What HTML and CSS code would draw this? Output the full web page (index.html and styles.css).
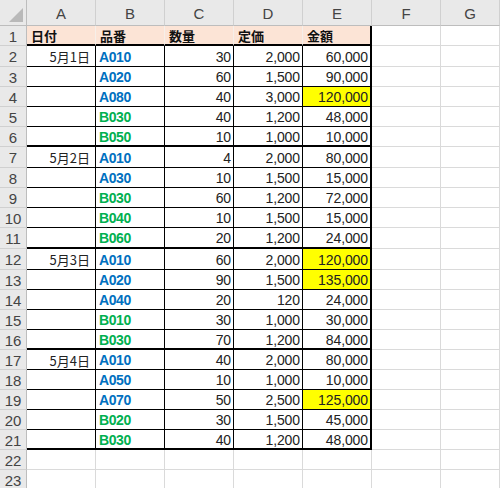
FILE: index.html
```html
<!DOCTYPE html>
<html lang="ja">
<head>
<meta charset="utf-8">
<link rel="stylesheet" href="styles.css">
</head>
<body>
<div class="sheet">
  <div class="cell corner"><svg class="tri" width="14" height="14" viewBox="0 0 14 14"><polygon points="14,0 14,14 0,14" fill="#b9b9b9"/></svg></div>
  <div class="cell ch">A</div><div class="cell ch">B</div><div class="cell ch">C</div><div class="cell ch">D</div><div class="cell ch">E</div><div class="cell ch">F</div><div class="cell ch">G</div>

  <div class="cell rh">1</div>
  <div class="cell t">日付</div><div class="cell t">品番</div><div class="cell t">数量</div><div class="cell t">定価</div><div class="cell t e">金額</div><div class="cell"></div><div class="cell"></div>

  <div class="cell rh">2</div>
  <div class="cell d n dt">5月1日</div><div class="cell d ca">A010</div><div class="cell d n">30</div><div class="cell d n">2,000</div><div class="cell d n e">60,000</div><div class="cell"></div><div class="cell"></div>

  <div class="cell rh">3</div>
  <div class="cell d"></div><div class="cell d ca">A020</div><div class="cell d n">60</div><div class="cell d n">1,500</div><div class="cell d n e">90,000</div><div class="cell"></div><div class="cell"></div>

  <div class="cell rh">4</div>
  <div class="cell d"></div><div class="cell d ca">A080</div><div class="cell d n">40</div><div class="cell d n">3,000</div><div class="cell d n e hl">120,000</div><div class="cell"></div><div class="cell"></div>

  <div class="cell rh">5</div>
  <div class="cell d"></div><div class="cell d cb">B030</div><div class="cell d n">40</div><div class="cell d n">1,200</div><div class="cell d n e">48,000</div><div class="cell"></div><div class="cell"></div>

  <div class="cell rh">6</div>
  <div class="cell d end"></div><div class="cell d cb end">B050</div><div class="cell d n end">10</div><div class="cell d n end">1,000</div><div class="cell d n e end">10,000</div><div class="cell"></div><div class="cell"></div>

  <div class="cell rh">7</div>
  <div class="cell d n dt">5月2日</div><div class="cell d ca">A010</div><div class="cell d n">4</div><div class="cell d n">2,000</div><div class="cell d n e">80,000</div><div class="cell"></div><div class="cell"></div>

  <div class="cell rh">8</div>
  <div class="cell d"></div><div class="cell d ca">A030</div><div class="cell d n">10</div><div class="cell d n">1,500</div><div class="cell d n e">15,000</div><div class="cell"></div><div class="cell"></div>

  <div class="cell rh">9</div>
  <div class="cell d"></div><div class="cell d cb">B030</div><div class="cell d n">60</div><div class="cell d n">1,200</div><div class="cell d n e">72,000</div><div class="cell"></div><div class="cell"></div>

  <div class="cell rh">10</div>
  <div class="cell d"></div><div class="cell d cb">B040</div><div class="cell d n">10</div><div class="cell d n">1,500</div><div class="cell d n e">15,000</div><div class="cell"></div><div class="cell"></div>

  <div class="cell rh">11</div>
  <div class="cell d end"></div><div class="cell d cb end">B060</div><div class="cell d n end">20</div><div class="cell d n end">1,200</div><div class="cell d n e end">24,000</div><div class="cell"></div><div class="cell"></div>

  <div class="cell rh">12</div>
  <div class="cell d n dt">5月3日</div><div class="cell d ca">A010</div><div class="cell d n">60</div><div class="cell d n">2,000</div><div class="cell d n e hl">120,000</div><div class="cell"></div><div class="cell"></div>

  <div class="cell rh">13</div>
  <div class="cell d"></div><div class="cell d ca">A020</div><div class="cell d n">90</div><div class="cell d n">1,500</div><div class="cell d n e hl">135,000</div><div class="cell"></div><div class="cell"></div>

  <div class="cell rh">14</div>
  <div class="cell d"></div><div class="cell d ca">A040</div><div class="cell d n">20</div><div class="cell d n">120</div><div class="cell d n e">24,000</div><div class="cell"></div><div class="cell"></div>

  <div class="cell rh">15</div>
  <div class="cell d"></div><div class="cell d cb">B010</div><div class="cell d n">30</div><div class="cell d n">1,000</div><div class="cell d n e">30,000</div><div class="cell"></div><div class="cell"></div>

  <div class="cell rh">16</div>
  <div class="cell d end"></div><div class="cell d cb end">B030</div><div class="cell d n end">70</div><div class="cell d n end">1,200</div><div class="cell d n e end">84,000</div><div class="cell"></div><div class="cell"></div>

  <div class="cell rh">17</div>
  <div class="cell d n dt">5月4日</div><div class="cell d ca">A010</div><div class="cell d n">40</div><div class="cell d n">2,000</div><div class="cell d n e">80,000</div><div class="cell"></div><div class="cell"></div>

  <div class="cell rh">18</div>
  <div class="cell d"></div><div class="cell d ca">A050</div><div class="cell d n">10</div><div class="cell d n">1,000</div><div class="cell d n e">10,000</div><div class="cell"></div><div class="cell"></div>

  <div class="cell rh">19</div>
  <div class="cell d"></div><div class="cell d ca">A070</div><div class="cell d n">50</div><div class="cell d n">2,500</div><div class="cell d n e hl">125,000</div><div class="cell"></div><div class="cell"></div>

  <div class="cell rh">20</div>
  <div class="cell d"></div><div class="cell d cb">B020</div><div class="cell d n">30</div><div class="cell d n">1,500</div><div class="cell d n e">45,000</div><div class="cell"></div><div class="cell"></div>

  <div class="cell rh">21</div>
  <div class="cell d end"></div><div class="cell d cb end">B030</div><div class="cell d n end">40</div><div class="cell d n end">1,200</div><div class="cell d n e end">48,000</div><div class="cell"></div><div class="cell"></div>

  <div class="cell rh">22</div>
  <div class="cell"></div><div class="cell"></div><div class="cell"></div><div class="cell"></div><div class="cell"></div><div class="cell"></div><div class="cell"></div>

  <div class="cell rh">23</div>
  <div class="cell"></div><div class="cell"></div><div class="cell"></div><div class="cell"></div><div class="cell"></div><div class="cell"></div><div class="cell"></div>
</div>
</body>
</html>
```

FILE: styles.css
```css
html, body {
  margin: 0;
  padding: 0;
  background: #ffffff;
}

.sheet {
  display: grid;
  width: 500px;
  grid-template-columns: 27px repeat(6, 69px) 1fr;
  grid-template-rows: 26px 20px 21px 20px 20px 20px 20px 21px 20px 20px 20px 21px 21px repeat(11, 20px);
  font-family: "Liberation Sans", "Noto Sans CJK JP", sans-serif;
  font-size: 14px;
  color: #222222;
}

.cell {
  box-sizing: border-box;
  display: flex;
  align-items: center;
  padding: 1px 3px 0 3px;
  white-space: nowrap;
  overflow: hidden;
  border-right: 1px solid #dadada;
  border-bottom: 1px solid #dadada;
}

.corner {
  background: #e9e9e9;
  border-right: 1px solid #bdbdbd;
  border-bottom: 1px solid #bdbdbd;
  justify-content: flex-end;
  align-items: flex-end;
  padding: 0 3px 3px 0;
}

.tri {
  display: block;
}

.ch {
  background: #e9e9e9;
  justify-content: center;
  color: #444444;
  font-size: 15px;
  border-right: 1px solid #d0d0d0;
  border-bottom: 1px solid #bdbdbd;
}

.rh {
  background: #e9e9e9;
  justify-content: center;
  color: #444444;
  font-size: 15px;
  padding: 1px 0 0 0;
  border-right: 1px solid #bdbdbd;
  border-bottom: 1px solid #d0d0d0;
}

.t {
  background: #fce4d6;
  font-family: "Noto Sans CJK JP", sans-serif;
  font-size: 13px;
  font-weight: bold;
  color: #111111;
  padding-left: 4px;
  border-right: 1px solid #f6efe9;
  border-bottom: 2px solid #000000;
}

.d {
  border-right: 1px solid #000000;
  border-bottom: 1px solid #000000;
}

.n {
  justify-content: flex-end;
  letter-spacing: -0.1px;
  padding-right: 2px;
}

.dt {
  font-family: "Noto Sans CJK JP", sans-serif;
  font-size: 13px;
  letter-spacing: 0;
  padding-right: 5px;
}

.ca,
.cb {
  font-weight: bold;
  letter-spacing: -0.4px;
}

.ca {
  color: #0070c0;
}

.cb {
  color: #00b050;
}

.e {
  border-right: 2px solid #000000;
}

.end {
  border-bottom: 2px solid #000000;
}

.hl {
  background: #ffff00;
}
```
